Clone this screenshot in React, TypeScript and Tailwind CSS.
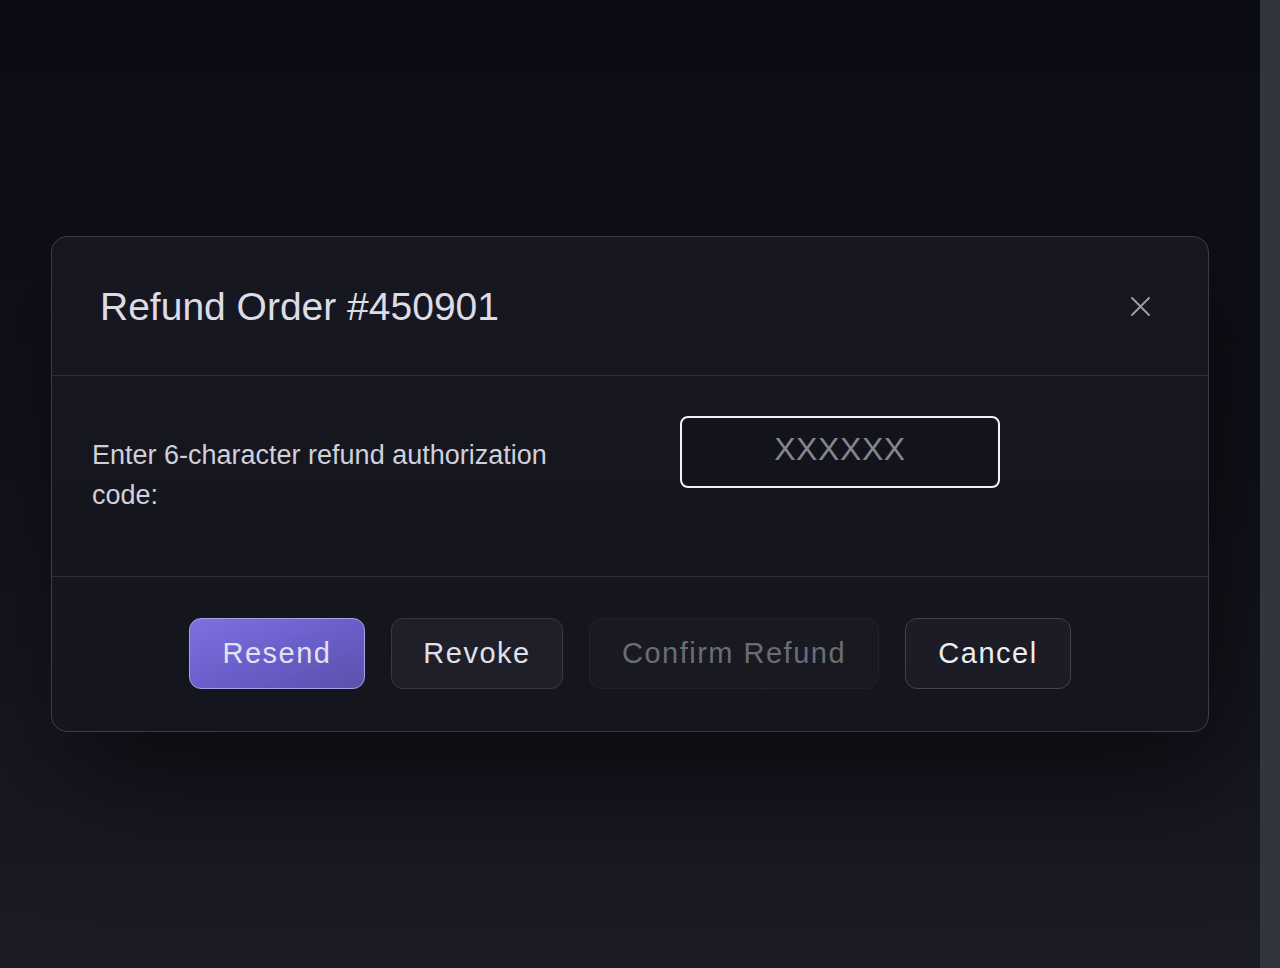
import React from "react";

export default function App() {
  return (
    <div
      className="flex h-[968px] w-full bg-gradient-to-b from-[#0b0b14] via-[#12121c] to-[#1b1b26]"
      style={{ fontFamily: '"Liberation Sans", Arial, sans-serif' }}
    >
      <main className="flex flex-1 items-center justify-center">
        <div className="w-[1158px] rounded-2xl border border-[#3b3b47] bg-gradient-to-b from-[#171721] to-[#15151e] shadow-[20px_50px_120px_rgba(0,0,0,0.55)]">
          <header className="flex h-[139px] items-center justify-between border-b border-[#30303b] px-12">
            <h2 className="text-[39px] leading-none text-[#dcdce6]">Refund Order #450901</h2>
            <button className="flex h-10 w-10 items-center justify-center text-[#9a9aa6]" aria-label="Close">
              <svg width="21" height="21" viewBox="0 0 21 21" fill="none" stroke="currentColor" strokeWidth="2" strokeLinecap="round">
                <path d="M2 2 L19 19 M19 2 L2 19" />
              </svg>
            </button>
          </header>
          <section className="flex h-[201px] items-start border-b border-[#30303b] pl-10 pt-10">
            <label className="mt-[19px] w-[500px] text-[27px] leading-[40px] text-[#cfd0dc]">
              Enter 6-character refund authorization code:
            </label>
            <div className="ml-[88px] flex h-[72px] w-[320px] items-center justify-center rounded-lg border-2 border-[#f2f2f6] bg-[#13131c] pb-[6px] text-[32px] tracking-[0.6px] text-[#85858f]">
              XXXXXX
            </div>
          </section>
          <footer className="flex items-center justify-center gap-[26px] pb-[42px] pt-[41px]">
            <button className="h-[71px] w-[176px] rounded-xl border-[1.5px] border-[#a8a2e6] bg-gradient-to-br from-[#7c71e0] via-[#6a5fca] to-[#5a51ac] text-[29px] tracking-[1.5px] text-[#e2e2f0]">
              Resend
            </button>
            <button className="h-[71px] w-[172px] rounded-xl border border-[#393946] bg-[#1f1f2a] text-[29px] tracking-[1.5px] text-[#e0e0ea]">
              Revoke
            </button>
            <button className="h-[71px] w-[290px] rounded-xl border border-[#22222c] bg-[#191922] text-[29px] tracking-[1.5px] text-[#6c6c76]">
              Confirm Refund
            </button>
            <button className="h-[71px] w-[166px] rounded-xl border border-[#43434f] bg-[#1c1c26] text-[29px] tracking-[1.5px] text-[#ececf4]">
              Cancel
            </button>
          </footer>
        </div>
      </main>
      <div className="w-[20px] shrink-0 bg-[#33353d]" />
    </div>
  );
}
